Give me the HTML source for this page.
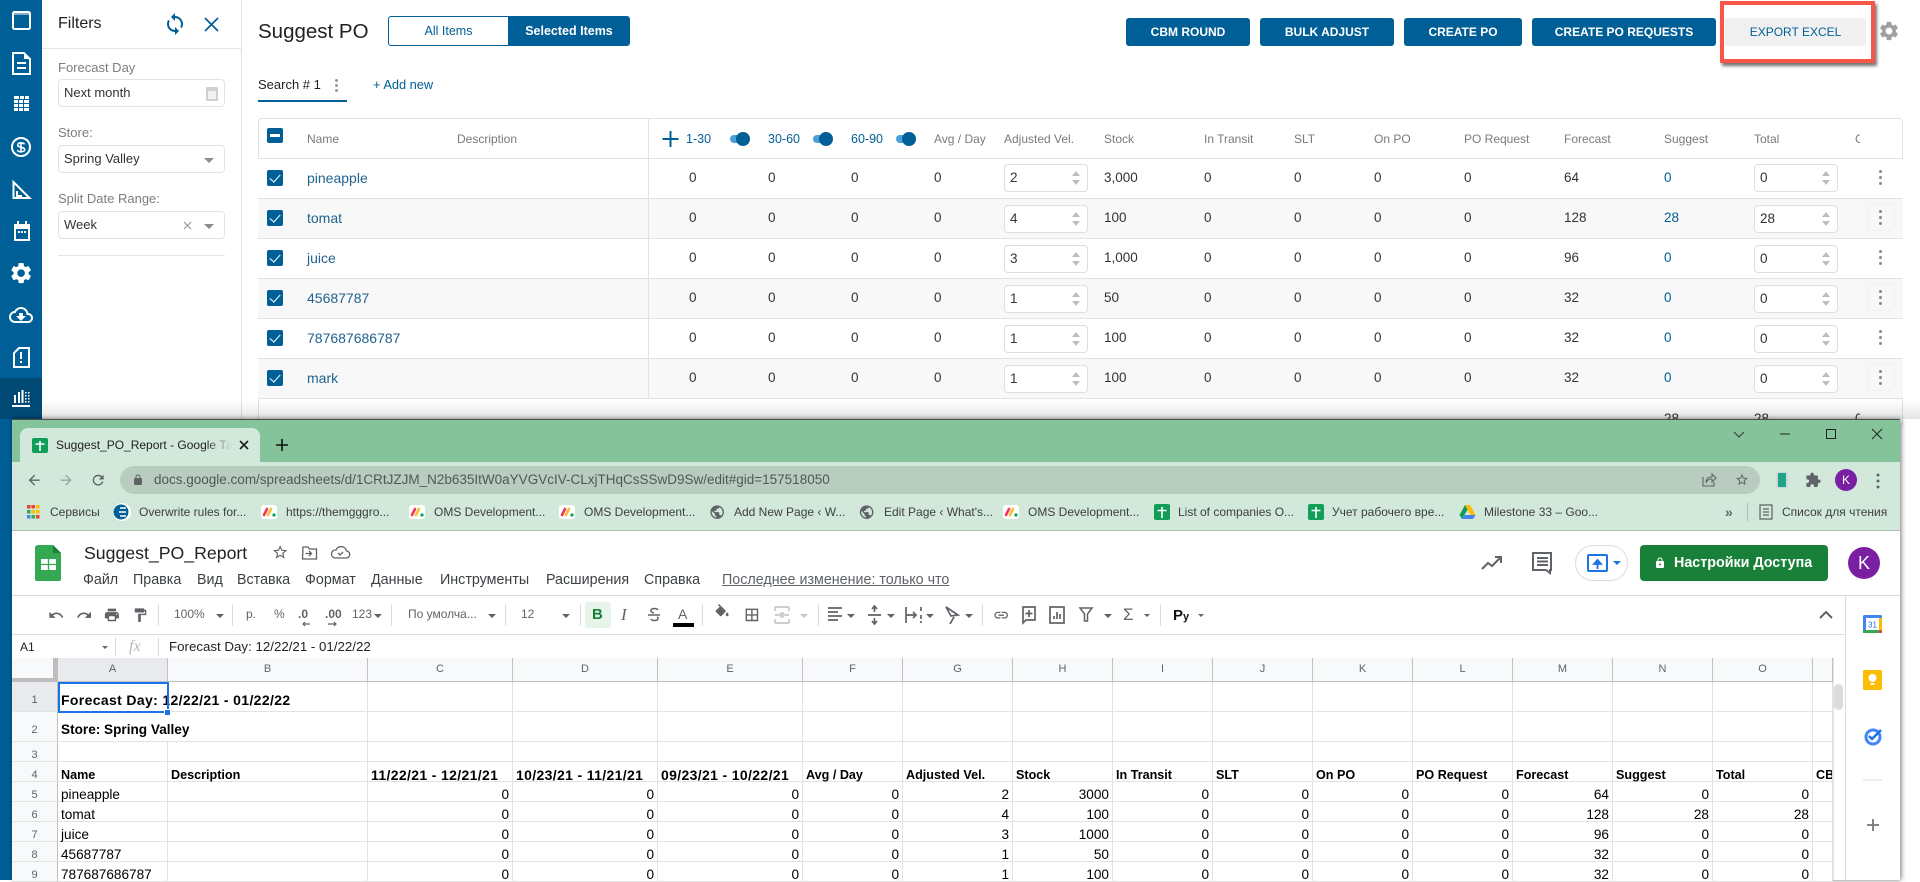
<!DOCTYPE html>
<html lang="en"><head><meta charset="utf-8"><title>Suggest PO</title>
<style>
*{box-sizing:border-box}
html,body{margin:0;padding:0;width:1920px;height:880px;overflow:hidden;background:#fff;font-family:"Liberation Sans","Noto Sans CJK SC",sans-serif;color:#333}
.a{position:absolute}
.t{position:absolute;white-space:nowrap;line-height:16px;margin-top:-8px}
.bl{background:#005f96}
.lbl{font-size:13px;color:#7d7d7d}
.inp{position:absolute;left:58px;width:167px;height:28px;border:1px solid #e3e3e3;border-radius:4px;background:#fff}
.inp span{position:absolute;left:5px;top:5px;font-size:13px;line-height:16px;color:#333}
.car{position:absolute;width:0;height:0;border-left:5px solid transparent;border-right:5px solid transparent;border-top:5px solid #8c8c8c}
.btn{position:absolute;top:18px;height:28px;border-radius:3px;background:#005f96;color:#fff;font-size:12px;font-weight:700;line-height:29px;text-align:center}
.h{position:absolute;top:139px;margin-top:-8px;line-height:16px;font-size:12px;color:#7a7a7a;white-space:nowrap}
.hb{color:#005f96}
.sw{position:absolute;top:132px;width:20px;height:14px}
.sw:before{content:"";position:absolute;left:0;top:3px;width:17px;height:8px;border-radius:4px;background:#4a9fd8}
.sw:after{content:"";position:absolute;right:0;top:0;width:14px;height:14px;border-radius:7px;background:#005f96}
.r{position:absolute;left:258px;width:1645px;height:40px;border-bottom:1px solid #e2e2e2;background:#fff}
.r.e{background:#f8f8f8}
.r>span{position:absolute;top:11px;line-height:16px;font-size:13.5px;color:#333;white-space:nowrap}
.r>.n{left:49px;color:#22648f;font-size:14px}
.c1{left:431px}.c2{left:510px}.c3{left:593px}.c4{left:676px}.st{left:846px}.tr{left:946px}.sl{left:1036px}.on{left:1116px}.rq{left:1206px}.fc{left:1306px}
.r>.sg{left:1406px;color:#005f96;font-weight:400}
.ck{position:absolute;left:9px;top:11px;width:16px;height:16px;background:#005f96;border-radius:2px}
.ck:after{content:"";position:absolute;left:5px;top:2px;width:5px;height:9px;border:solid #fff;border-width:0 1.6px 1.6px 0;transform:rotate(42deg)}
.in{position:absolute;top:6px;width:84px;height:28px;background:#fff;border:1px solid #dedede;border-radius:4px;font-size:13.5px;line-height:26px;padding-left:5px;color:#333}
.in:before,.in:after{content:"";position:absolute;right:7px;width:0;height:0;border-left:4.5px solid transparent;border-right:4.5px solid transparent}
.in:before{top:6px;border-bottom:5px solid #bdbdbd}
.in:after{bottom:6px;border-top:5px solid #bdbdbd}
.i1{left:746px}.i2{left:1496px}
.ds{position:absolute;left:1621px;top:11px;width:3px;height:3px;border-radius:2px;background:#8a8a8a;box-shadow:0 6px #8a8a8a,0 12px #8a8a8a}
.hv{position:absolute;left:1609px;top:4px;width:28px;height:28px;border:1px solid #f0f0f0;border-radius:4px}
.bm{position:absolute;top:504px;font-size:12px;line-height:16px;color:#3c4043;white-space:nowrap}
.m{position:absolute;top:572px;font-size:14.3px;line-height:16px;color:#3c4043;white-space:nowrap}
.tb{position:absolute;top:606px;font-size:12px;line-height:16px;color:#5f6368;white-space:nowrap}
.tc{position:absolute;width:0;height:0;border-left:4px solid transparent;border-right:4px solid transparent;border-top:4px solid #5f6368;top:614px}
.sp{position:absolute;top:604px;width:1px;height:22px;background:#dadce0}
table.g{position:absolute;left:12px;top:658px;width:1821px;border-collapse:separate;border-spacing:0;table-layout:fixed;font-size:13.6px;color:#000;background:#fff}
.g td{padding:7px 3px 0;border-right:1px solid #e2e3e3;border-bottom:1px solid #e2e3e3;white-space:nowrap;overflow:visible;font-weight:400;line-height:12px}
.g th{padding:0;border-right:1px solid #c0c0c0;border-bottom:1px solid #c0c0c0;background:#f8f9fa;color:#5f6368;font-size:11px;font-weight:400;text-align:center;height:24px;line-height:15px}
.g td.rh{background:#f8f9fa;color:#5f6368;font-size:11px;text-align:center;border-right:1px solid #c0c0c0;padding:6px 0 0}
.g td.v{text-align:right}
.g td.k{font-size:12.6px;font-weight:700}
.g td.d{font-size:14px;letter-spacing:.35px;font-weight:700}
.g td.s{font-size:13.6px;font-weight:700}
.g tr.h30 td{height:30px}.g tr.h20 td{height:20px}
</style></head><body>

<!-- app background -->
<div class="a bl" style="left:0;top:0;width:42px;height:880px"></div>
<div class="a" style="left:0;top:378px;width:42px;height:41px;background:#004a75"></div>
<div class="a" style="left:241px;top:0;width:1px;height:420px;background:#e0e0e0"></div>
<div class="a" style="left:42px;top:48px;width:199px;height:1px;background:#e6e6e6"></div>

<div class="t" style="left:58px;top:24px;font-size:16px;color:#222">Filters</div>
<div class="t lbl" style="left:58px;top:68px">Forecast Day</div>
<div class="inp" style="top:79px"><span>Next month</span><div class="a" style="left:147px;top:7px;width:12px;height:14px;background:#d0d0d0;border-radius:1px"><div class="a" style="left:2px;top:4px;width:8px;height:8px;background:#f2f2f2"></div></div></div>
<div class="t lbl" style="left:58px;top:133px">Store:</div>
<div class="inp" style="top:145px"><span>Spring Valley</span><i class="car" style="left:145px;top:12px"></i></div>
<div class="t lbl" style="left:58px;top:199px">Split Date Range:</div>
<div class="inp" style="top:211px"><span>Week</span><i class="car" style="left:145px;top:12px"></i></div>
<div class="a" style="left:58px;top:255px;width:167px;height:1px;background:#e6e6e6"></div>

<div class="t" style="left:258px;top:32px;font-size:20.5px;line-height:24px;margin-top:-12px;color:#222">Suggest PO</div>
<div class="a" style="left:388px;top:16px;width:242px;height:30px;border:1px solid #005f96;border-radius:3px;overflow:hidden">
  <div class="a" style="left:0;top:0;width:119px;height:28px;text-align:center;font-size:12.5px;line-height:28px;color:#005f96">All Items</div>
  <div class="a bl" style="left:119px;top:0;width:122px;height:28px;text-align:center;font-size:12.5px;font-weight:700;line-height:28px;color:#fff">Selected Items</div>
</div>

<div class="t" style="left:258px;top:85px;font-size:13px;color:#222">Search # 1</div>
<div class="a" style="left:335px;top:79px;width:3px;height:3px;border-radius:2px;background:#9a9a9a;box-shadow:0 5px #9a9a9a,0 10px #9a9a9a"></div>
<div class="a bl" style="left:258px;top:100px;width:89px;height:2px"></div>
<div class="t" style="left:373px;top:85px;font-size:12.8px;color:#005f96">+ Add new</div>

<div class="btn" style="left:1126px;width:124px">CBM ROUND</div>
<div class="btn" style="left:1260px;width:134px">BULK ADJUST</div>
<div class="btn" style="left:1404px;width:118px">CREATE PO</div>
<div class="btn" style="left:1532px;width:184px">CREATE PO REQUESTS</div>
<div class="btn" style="left:1725px;width:141px;background:#f0f0f0;color:#005f96;font-weight:400">EXPORT EXCEL</div>
<div class="a" style="left:1720px;top:1px;width:155px;height:62px;border:4px solid #f9564a;box-shadow:2px 3px 3px rgba(0,0,0,.55)"></div>

<!-- table -->
<div class="a" style="left:258px;top:118px;width:1645px;height:310px;border:1px solid #e2e2e2;border-radius:4px;background:#fff"></div>
<div class="a" style="left:259px;top:158px;width:1643px;height:1px;background:#e2e2e2"></div>
<div class="a" style="left:267px;top:128px;width:16px;height:15px;background:#005f96;border-radius:2px"><div class="a" style="left:3px;top:6px;width:10px;height:2.5px;background:#fff"></div></div>
<div class="h" style="left:307px">Name</div>
<div class="h" style="left:457px">Description</div>
<div class="h hb" style="left:686px;font-size:12.5px">1-30</div><div class="sw" style="left:730px"></div>
<div class="h hb" style="left:768px;font-size:12.5px">30-60</div><div class="sw" style="left:813px"></div>
<div class="h hb" style="left:851px;font-size:12.5px">60-90</div><div class="sw" style="left:896px"></div>
<div class="h" style="left:934px">Avg / Day</div>
<div class="h" style="left:1004px">Adjusted Vel.</div>
<div class="h" style="left:1104px">Stock</div>
<div class="h" style="left:1204px">In Transit</div>
<div class="h" style="left:1294px">SLT</div>
<div class="h" style="left:1374px">On PO</div>
<div class="h" style="left:1464px">PO Request</div>
<div class="h" style="left:1564px">Forecast</div>
<div class="h" style="left:1664px">Suggest</div>
<div class="h" style="left:1754px">Total</div>
<div class="h" style="left:1855px;width:5px;overflow:hidden">CBM</div>

<div class="r" style="top:159px"><i class="ck"></i><span class="n">pineapple</span><span class="c1">0</span><span class="c2">0</span><span class="c3">0</span><span class="c4">0</span><div class="in i1" style="top:5px">2</div><span class="st">3,000</span><span class="tr">0</span><span class="sl">0</span><span class="on">0</span><span class="rq">0</span><span class="fc">64</span><span class="sg">0</span><div class="in i2" style="top:5px">0</div><i class="ds"></i></div>
<div class="r e" style="top:199px"><i class="ck"></i><span class="n">tomat</span><span class="c1">0</span><span class="c2">0</span><span class="c3">0</span><span class="c4">0</span><div class="in i1">4</div><span class="st">100</span><span class="tr">0</span><span class="sl">0</span><span class="on">0</span><span class="rq">0</span><span class="fc">128</span><span class="sg">28</span><div class="in i2">28</div><i class="hv"></i><i class="ds"></i></div>
<div class="r" style="top:239px"><i class="ck"></i><span class="n">juice</span><span class="c1">0</span><span class="c2">0</span><span class="c3">0</span><span class="c4">0</span><div class="in i1">3</div><span class="st">1,000</span><span class="tr">0</span><span class="sl">0</span><span class="on">0</span><span class="rq">0</span><span class="fc">96</span><span class="sg">0</span><div class="in i2">0</div><i class="ds"></i></div>
<div class="r e" style="top:279px"><i class="ck"></i><span class="n">45687787</span><span class="c1">0</span><span class="c2">0</span><span class="c3">0</span><span class="c4">0</span><div class="in i1">1</div><span class="st">50</span><span class="tr">0</span><span class="sl">0</span><span class="on">0</span><span class="rq">0</span><span class="fc">32</span><span class="sg">0</span><div class="in i2">0</div><i class="hv"></i><i class="ds"></i></div>
<div class="r" style="top:319px"><i class="ck"></i><span class="n">787687686787</span><span class="c1">0</span><span class="c2">0</span><span class="c3">0</span><span class="c4">0</span><div class="in i1">1</div><span class="st">100</span><span class="tr">0</span><span class="sl">0</span><span class="on">0</span><span class="rq">0</span><span class="fc">32</span><span class="sg">0</span><div class="in i2">0</div><i class="ds"></i></div>
<div class="r e" style="top:359px"><i class="ck"></i><span class="n">mark</span><span class="c1">0</span><span class="c2">0</span><span class="c3">0</span><span class="c4">0</span><div class="in i1">1</div><span class="st">100</span><span class="tr">0</span><span class="sl">0</span><span class="on">0</span><span class="rq">0</span><span class="fc">32</span><span class="sg">0</span><div class="in i2">0</div><i class="hv"></i><i class="ds"></i></div>
<div class="a" style="left:648px;top:119px;width:1px;height:279px;background:#e2e2e2"></div>
<div class="t" style="left:1664px;top:419px;font-size:13.5px">28</div>
<div class="t" style="left:1754px;top:419px;font-size:13.5px">28</div>
<div class="t" style="left:1855px;top:419px;font-size:13.5px;width:5px;overflow:hidden">0</div>
<div class="a" style="left:42px;top:400px;width:1878px;height:19px;background:linear-gradient(rgba(0,0,0,0),rgba(0,0,0,.1))"></div>

<!-- browser window -->
<div class="a" style="left:12px;top:419px;width:1888px;height:461px;background:#fff;box-shadow:1px 0 5px rgba(0,0,0,.55);border-top:1px solid #47564d"></div>
<div class="a" style="left:12px;top:420px;width:1888px;height:42px;background:#85c39a"></div>
<div class="a" style="left:12px;top:462px;width:1888px;height:69px;background:#d2e8da;border-bottom:1px solid #a9bfb1"></div>
<div class="a" style="left:20px;top:428px;width:240px;height:36px;background:#d2e8da;border-radius:8px 8px 0 0"></div>
<div class="t" style="left:56px;top:445px;font-size:12px;width:176px;overflow:hidden;color:#222">Suggest_PO_Report - Google Таблицы</div>
<div class="a" style="left:205px;top:437px;width:27px;height:16px;background:linear-gradient(90deg,rgba(210,232,218,0),#d2e8da)"></div>
<div class="a" style="left:120px;top:466px;width:1640px;height:28px;border-radius:14px;background:#b9ccc0"></div>
<div class="t" style="left:154px;top:480px;font-size:13.5px;color:#4d5a53">docs.google.com/spreadsheets/d/1CRtJZJM_N2b635ItW0aYVGVcIV-CLxjTHqCsSSwD9Sw/edit#gid=157518050</div>

<div class="bm" style="left:50px">Сервисы</div>
<div class="bm" style="left:139px">Overwrite rules for...</div>
<div class="bm" style="left:286px">https://themgggro...</div>
<div class="bm" style="left:434px">OMS Development...</div>
<div class="bm" style="left:584px">OMS Development...</div>
<div class="bm" style="left:734px">Add New Page ‹ W...</div>
<div class="bm" style="left:884px">Edit Page ‹ What's...</div>
<div class="bm" style="left:1028px">OMS Development...</div>
<div class="bm" style="left:1178px">List of companies O...</div>
<div class="bm" style="left:1332px">Учет рабочего вре...</div>
<div class="bm" style="left:1484px">Milestone 33 – Goo...</div>
<div class="bm" style="left:1725px;font-size:14px;font-weight:700;color:#5f6368">»</div>
<div class="a" style="left:1747px;top:503px;width:1px;height:18px;background:#a9bfb1"></div>
<div class="bm" style="left:1782px">Список для чтения</div>

<!-- sheets header -->
<div class="t" style="left:84px;top:553px;font-size:17.7px;line-height:22px;margin-top:-11px;color:#222">Suggest_PO_Report</div>
<div class="m" style="left:83px">Файл</div>
<div class="m" style="left:133px">Правка</div>
<div class="m" style="left:197px">Вид</div>
<div class="m" style="left:237px">Вставка</div>
<div class="m" style="left:305px">Формат</div>
<div class="m" style="left:371px">Данные</div>
<div class="m" style="left:440px">Инструменты</div>
<div class="m" style="left:546px">Расширения</div>
<div class="m" style="left:644px">Справка</div>
<div class="m" style="left:722px;color:#5f6368;text-decoration:underline">Последнее изменение: только что</div>

<div class="a" style="left:1575px;top:545px;width:53px;height:36px;border:1px solid #dadce0;border-radius:18px"></div>
<div class="a" style="left:1587px;top:554px;width:21px;height:18px;border:2px solid #1a73e8;border-radius:2px"></div>
<div class="a" style="left:1613px;top:561px;width:0;height:0;border-left:4px solid transparent;border-right:4px solid transparent;border-top:4px solid #1a73e8"></div>
<div class="a" style="left:1640px;top:545px;width:188px;height:36px;border-radius:4px;background:#188038"></div>
<div class="t" style="left:1674px;top:563px;font-size:14.3px;font-weight:700;color:#fff">Настройки Доступа</div>
<div class="a" style="left:1848px;top:547px;width:32px;height:32px;border-radius:16px;background:#7b1fa2;color:#fff;font-size:18px;line-height:32px;text-align:center">K</div>
<div class="a" style="left:1835px;top:469px;width:22px;height:22px;border-radius:11px;background:#7b1fa2;color:#fff;font-size:12px;line-height:22px;text-align:center">K</div>

<div class="a" style="left:12px;top:595px;width:1888px;height:1px;background:#dadce0"></div>
<div class="a" style="left:12px;top:634px;width:1833px;height:1px;background:#dadce0"></div>
<div class="a" style="left:1845px;top:595px;width:1px;height:285px;background:#dadce0"></div>

<!-- sheets toolbar text & separators -->
<div class="sp" style="left:158px"></div><div class="sp" style="left:232px"></div><div class="sp" style="left:391px"></div><div class="sp" style="left:505px"></div><div class="sp" style="left:580px"></div><div class="sp" style="left:702px"></div><div class="sp" style="left:818px"></div><div class="sp" style="left:982px"></div><div class="sp" style="left:1160px"></div>
<div class="tb" style="left:174px">100%</div><i class="tc" style="left:216px"></i>
<div class="tb" style="left:246px">р.</div>
<div class="tb" style="left:274px">%</div>
<div class="tb" style="left:298px;font-weight:700">.0</div>
<div class="tb" style="left:325px;font-weight:700">.00</div>
<div class="tb" style="left:352px">123</div><i class="tc" style="left:374px"></i>
<div class="tb" style="left:408px">По умолча...</div><i class="tc" style="left:488px"></i>
<div class="tb" style="left:521px">12</div><i class="tc" style="left:562px"></i>
<div class="a" style="left:585px;top:602px;width:26px;height:26px;border-radius:3px;background:#e6f4ea"></div>
<div class="t" style="left:592px;top:615px;font-size:15px;font-weight:700;color:#188038">B</div>
<div class="t" style="left:621px;top:615px;font-size:17px;font-style:italic;font-family:'Liberation Serif',serif;color:#5f6368">I</div>
<div class="t" style="left:678px;top:614px;font-size:14px;color:#5f6368">A</div>
<div class="a" style="left:673px;top:623px;width:21px;height:4px;background:#000"></div>
<i class="tc" style="left:800px;border-top-color:#c4c4c4"></i><i class="tc" style="left:847px"></i><i class="tc" style="left:887px"></i><i class="tc" style="left:926px"></i><i class="tc" style="left:965px"></i><i class="tc" style="left:1104px"></i><i class="tc" style="left:1144px;border-left-width:3px;border-right-width:3px;border-top-width:3px"></i><i class="tc" style="left:1198px;border-left-width:3px;border-right-width:3px;border-top-width:3px"></i>
<div class="t" style="left:1123px;top:615px;font-size:17px;color:#5f6368">Σ</div>
<div class="t" style="left:1173px;top:616px;font-size:15px;font-weight:700;color:#111">P<span style="font-size:11px">y</span></div>

<!-- formula bar -->
<div class="t" style="left:20px;top:647px;font-size:12px;color:#222">A1</div>
<div class="a" style="left:102px;top:646px;width:0;height:0;border-left:3px solid transparent;border-right:3px solid transparent;border-top:3px solid #5f6368"></div>
<div class="a" style="left:115px;top:637px;width:1px;height:19px;background:#dadce0"></div>
<div class="t" style="left:129px;top:647px;font-size:16px;font-style:italic;font-family:'Liberation Serif',serif;color:#b5b5b5">fx</div>
<div class="a" style="left:158px;top:637px;width:1px;height:19px;background:#dadce0"></div>
<div class="t" style="left:169px;top:647px;font-size:13.3px;color:#222">Forecast Day: 12/22/21 - 01/22/22</div>

<!-- sheet grid -->
<table class="g">
<colgroup><col style="width:46px"><col style="width:110px"><col style="width:200px"><col style="width:145px"><col style="width:145px"><col style="width:145px"><col style="width:100px"><col style="width:110px"><col style="width:100px"><col style="width:100px"><col style="width:100px"><col style="width:100px"><col style="width:100px"><col style="width:100px"><col style="width:100px"><col style="width:100px"><col style="width:20px"></colgroup>
<tr class="ch"><th></th><th style="background:#e8eaed">A</th><th>B</th><th>C</th><th>D</th><th>E</th><th>F</th><th>G</th><th>H</th><th>I</th><th>J</th><th>K</th><th>L</th><th>M</th><th>N</th><th>O</th><th></th></tr>
<tr class="h30"><td class="rh" style="background:#e8eaed">1</td><td class="d" style="border-right:0">Forecast Day: 12/22/21 - 01/22/22</td><td></td><td></td><td></td><td></td><td></td><td></td><td></td><td></td><td></td><td></td><td></td><td></td><td></td><td></td><td></td></tr>
<tr class="h30"><td class="rh">2</td><td class="s" style="border-right:0">Store: Spring Valley</td><td></td><td></td><td></td><td></td><td></td><td></td><td></td><td></td><td></td><td></td><td></td><td></td><td></td><td></td><td></td></tr>
<tr class="h20"><td class="rh">3</td><td></td><td></td><td></td><td></td><td></td><td></td><td></td><td></td><td></td><td></td><td></td><td></td><td></td><td></td><td></td><td></td></tr>
<tr class="h20"><td class="rh">4</td><td class="k">Name</td><td class="k">Description</td><td class="d">11/22/21 - 12/21/21</td><td class="d">10/23/21 - 11/21/21</td><td class="d">09/23/21 - 10/22/21</td><td class="k">Avg / Day</td><td class="k">Adjusted Vel.</td><td class="k">Stock</td><td class="k">In Transit</td><td class="k">SLT</td><td class="k">On PO</td><td class="k">PO Request</td><td class="k">Forecast</td><td class="k">Suggest</td><td class="k">Total</td><td class="k" style="overflow:hidden">CB</td></tr>
<tr class="h20"><td class="rh">5</td><td>pineapple</td><td></td><td class="v">0</td><td class="v">0</td><td class="v">0</td><td class="v">0</td><td class="v">2</td><td class="v">3000</td><td class="v">0</td><td class="v">0</td><td class="v">0</td><td class="v">0</td><td class="v">64</td><td class="v">0</td><td class="v">0</td><td></td></tr>
<tr class="h20"><td class="rh">6</td><td>tomat</td><td></td><td class="v">0</td><td class="v">0</td><td class="v">0</td><td class="v">0</td><td class="v">4</td><td class="v">100</td><td class="v">0</td><td class="v">0</td><td class="v">0</td><td class="v">0</td><td class="v">128</td><td class="v">28</td><td class="v">28</td><td></td></tr>
<tr class="h20"><td class="rh">7</td><td>juice</td><td></td><td class="v">0</td><td class="v">0</td><td class="v">0</td><td class="v">0</td><td class="v">3</td><td class="v">1000</td><td class="v">0</td><td class="v">0</td><td class="v">0</td><td class="v">0</td><td class="v">96</td><td class="v">0</td><td class="v">0</td><td></td></tr>
<tr class="h20"><td class="rh">8</td><td>45687787</td><td></td><td class="v">0</td><td class="v">0</td><td class="v">0</td><td class="v">0</td><td class="v">1</td><td class="v">50</td><td class="v">0</td><td class="v">0</td><td class="v">0</td><td class="v">0</td><td class="v">32</td><td class="v">0</td><td class="v">0</td><td></td></tr>
<tr class="h20"><td class="rh">9</td><td>787687686787</td><td></td><td class="v">0</td><td class="v">0</td><td class="v">0</td><td class="v">0</td><td class="v">1</td><td class="v">100</td><td class="v">0</td><td class="v">0</td><td class="v">0</td><td class="v">0</td><td class="v">32</td><td class="v">0</td><td class="v">0</td><td></td></tr>
</table>
<div class="a" style="left:53px;top:658px;width:5px;height:24px;background:#bdbdbd"></div>
<div class="a" style="left:12px;top:678px;width:46px;height:4px;background:#bdbdbd"></div>
<div class="a" style="left:58px;top:682px;width:111px;height:31px;border:2px solid #1a73e8"></div>
<div class="a" style="left:164px;top:709px;width:7px;height:7px;background:#1a73e8;border:1px solid #fff"></div>
<div class="a" style="left:1833px;top:658px;width:12px;height:222px;background:#fff;border-left:1px solid #e2e3e3"></div>
<div class="a" style="left:1834px;top:684px;width:9px;height:26px;border-radius:5px;background:#dadce0"></div>

<!-- icons -->
<svg class="a" style="left:0;top:0" width="1920" height="880" viewBox="0 0 1920 880" fill="none">
 <!-- sidebar -->
 <g fill="none" stroke="#fff" stroke-width="2">
  <rect x="13" y="12" width="17" height="17" rx="1.5"/><path d="M13 14h17" stroke-width="1"/>
  <path d="M13 53h11l6 6v15H13z"/><path d="M17 63h9M17 68h9"/>
  <circle cx="21" cy="147" r="9"/>
  <path d="M13.5 182v16h16zM17 191v5h5"/>
 </g>
 <g fill="#fff">
  <path d="M24 53l6 6h-6z"/>
  <path d="M14 96h5v3h-5zM20 96h4v3h-4zM25 96h4v3h-4zM14 100h4v3h-4zM19 100h4v3h-4zM24 100h5v3h-5zM14 104h4v3h-4zM19 104h4v3h-4zM24 104h5v3h-5zM14 108h4v3h-4zM19 108h4v3h-4zM24 108h5v3h-5z"/>
  <path d="M14 224h3v-3h2v3h6v-3h2v3h3v17H14zm2 5v10h12v-10zM18 231h2v2h-2zM21 231h2v2h-2zM24 231h2v2h-2z" fill-rule="evenodd"/>
  <path transform="translate(8.5 260.5) scale(1.05)" d="M19.14 12.94c.04-.3.06-.61.06-.94 0-.32-.02-.64-.07-.94l2.03-1.58c.18-.14.23-.41.12-.61l-1.92-3.32c-.12-.22-.37-.29-.59-.22l-2.39.96c-.5-.38-1.03-.7-1.62-.94l-.36-2.54c-.04-.24-.24-.41-.48-.41h-3.84c-.24 0-.43.17-.47.41l-.36 2.54c-.59.24-1.13.57-1.62.94l-2.39-.96c-.22-.08-.47 0-.59.22L2.74 8.87c-.12.21-.08.47.12.61l2.03 1.58c-.05.3-.09.63-.09.94s.02.64.07.94l-2.03 1.58c-.18.14-.23.41-.12.61l1.92 3.32c.12.22.37.29.59.22l2.39-.96c.5.38 1.03.7 1.62.94l.36 2.54c.05.24.24.41.48.41h3.84c.24 0 .44-.17.47-.41l.36-2.54c.59-.24 1.13-.56 1.62-.94l2.39.96c.22.08.47 0 .59-.22l1.92-3.32c.12-.22.07-.47-.12-.61l-2.01-1.58zM12 15.6c-1.98 0-3.6-1.62-3.6-3.6s1.62-3.6 3.6-3.6 3.6 1.62 3.6 3.6-1.62 3.6-3.6 3.6z"/>
  <path transform="translate(9 303)" d="M19.35 10.04C18.67 6.59 15.64 4 12 4 9.11 4 6.6 5.64 5.35 8.04 2.34 8.36 0 10.91 0 14c0 3.31 2.69 6 6 6h13c2.76 0 5-2.24 5-5 0-2.64-2.05-4.78-4.65-4.96zM19 18H6c-2.21 0-4-1.79-4-4s1.79-4 4-4h.71C7.37 7.69 9.48 6 12 6c3.04 0 5.5 2.46 5.5 5.5v.5H19c1.66 0 3 1.34 3 3s-1.34 3-3 3zM14 13v-3h-4v3H7l5 5 5-5z"/>
  <path d="M14 395h2v8h-2zM18 392h2v11h-2zM21.500 390h2v13h-2zM25 392h1.500v1.500H25zM25 395h1.500v1.500H25zM25 398h1.500v1.500H25zM25 401h1.500v1.500H25zM28 392h1.500v1.500H28zM28 395h1.500v1.500H28zM28 398h1.500v1.500H28zM28 401h1.500v1.500H28zM12 405h18v2H12z"/>
  <path d="M20 352h2v7h-2zM20 361h2v2h-2z"/>
 </g>
 <path d="M19 348h10v19H14v-14z" stroke="#fff" stroke-width="2"/>
 <path d="M21 142v10M24.5 144.3c-.6-1-1.8-1.5-3.5-1.5-2 0-3.3.9-3.3 2.2 0 3 7 1.6 7 4.6 0 1.3-1.5 2.2-3.7 2.2-1.7 0-3.1-.6-3.7-1.7" stroke="#fff" stroke-width="1.6"/>

 <!-- filter head -->
 <path transform="translate(163 12)" fill="#005f96" d="M12 4V1L8 5l4 4V6c3.31 0 6 2.69 6 6 0 1.01-.25 1.97-.7 2.8l1.46 1.46C19.54 15.03 20 13.57 20 12c0-4.42-3.58-8-8-8zm0 14c-3.31 0-6-2.69-6-6 0-1.01.25-1.97.7-2.8L5.24 7.74C4.46 8.97 4 10.43 4 12c0 4.42 3.58 8 8 8v3l4-4-4-4v3z" />
 <path d="M205 18l13 13M218 18l-13 13" stroke="#005f96" stroke-width="1.7"/>
 <path d="M184 222l7 7M191 222l-7 7" stroke="#9a9a9a" stroke-width="1.2"/>
 <!-- plus header -->
 <path d="M662.5 139h16M670.5 131v16" stroke="#005f96" stroke-width="2"/>
 <!-- gear -->
 <path transform="translate(1877.600 19.600) scale(.95)" fill="#a0a0a0" d="M19.14 12.94c.04-.3.06-.61.06-.94 0-.32-.02-.64-.07-.94l2.03-1.58c.18-.14.23-.41.12-.61l-1.92-3.32c-.12-.22-.37-.29-.59-.22l-2.39.96c-.5-.38-1.03-.7-1.62-.94l-.36-2.54c-.04-.24-.24-.41-.48-.41h-3.84c-.24 0-.43.17-.47.41l-.36 2.54c-.59.24-1.13.57-1.62.94l-2.39-.96c-.22-.08-.47 0-.59.22L2.74 8.87c-.12.21-.08.47.12.61l2.03 1.58c-.05.3-.09.63-.09.94s.02.64.07.94l-2.03 1.58c-.18.14-.23.41-.12.61l1.92 3.32c.12.22.37.29.59.22l2.39-.96c.5.38 1.03.7 1.62.94l.36 2.54c.05.24.24.41.48.41h3.84c.24 0 .44-.17.47-.41l.36-2.54c.59-.24 1.13-.56 1.62-.94l2.39.96c.22.08.47 0 .59-.22l1.92-3.32c.12-.22.07-.47-.12-.61l-2.01-1.58zM12 15.6c-1.98 0-3.6-1.62-3.6-3.6s1.62-3.6 3.6-3.6 3.6 1.62 3.6 3.6-1.62 3.6-3.6 3.6z"/>

 <!-- chrome tab -->
 <rect x="32" y="438" width="16" height="15" rx="2" fill="#0f9d58"/><path d="M40 441v10M35.5 444h9" stroke="#fff" stroke-width="1.6"/>
 <path d="M240 441l8 8M248 441l-8 8" stroke="#222" stroke-width="1.7"/>
 <path d="M276 445h12M282 439v12" stroke="#111" stroke-width="1.6"/>
 <!-- win controls -->
 <path d="M1734 432l5 5 5-5" stroke="#333" stroke-width="1"/><path d="M1780 434h10" stroke="#222" stroke-width="1"/><rect x="1826.5" y="429.5" width="9" height="9" stroke="#222"/><path d="M1872 429l10 10M1882 429l-10 10" stroke="#222" stroke-width="1"/>
 <!-- nav -->
 <path transform="translate(26 472) scale(.68)" fill="#5f6368" d="M20 11H7.83l5.59-5.59L12 4l-8 8 8 8 1.41-1.41L7.83 13H20v-2z"/>
 <path transform="translate(58 472) scale(.68)" fill="#9aa59f" d="M12 4l-1.41 1.41L16.17 11H4v2h12.17l-5.58 5.59L12 20l8-8z"/>
 <path transform="translate(90 472) scale(.68)" fill="#5f6368" d="M17.65 6.35C16.2 4.9 14.21 4 12 4c-4.42 0-7.99 3.58-7.99 8s3.57 8 7.99 8c3.73 0 6.84-2.55 7.73-6h-2.08c-.82 2.33-3.04 4-5.65 4-3.31 0-6-2.69-6-6s2.69-6 6-6c1.66 0 3.14.69 4.22 1.78L13 11h7V4l-2.35 2.35z"/>
 <path transform="translate(132 474) scale(.5)" fill="#5f6368" d="M18 8h-1V6c0-2.76-2.24-5-5-5S7 3.24 7 6v2H6c-1.1 0-2 .9-2 2v10c0 1.1.9 2 2 2h12c1.1 0 2-.9 2-2V10c0-1.1-.9-2-2-2zm-2.9 0H8.9V6c0-1.71 1.39-3.1 3.1-3.1 1.71 0 3.1 1.39 3.1 3.1v2z"/>
 <!-- omnibox right -->
 <path d="M1703 477v9h11v-4M1706 483c0-4 2-6 6-6v-3l4 4-4 4v-3c-3 0-5 1-6 4z" stroke="#5f6368" stroke-width="1.1"/>
 <path transform="translate(1734.8 472.5) scale(.6)" fill="#5f6368" d="M22 9.24l-7.19-.62L12 2 9.19 8.63 2 9.24l5.46 4.73L5.82 21 12 17.27 18.18 21l-1.63-7.03L22 9.24zM12 15.4l-3.76 2.27 1-4.28-3.32-2.88 4.38-.38L12 6.1l1.71 4.04 4.38.38-3.32 2.88 1 4.28L12 15.4z"/>
 <rect x="1776" y="472" width="12" height="16" rx="1" fill="#cfd8d3"/><rect x="1778" y="473" width="8" height="14" fill="#1fa48c"/>
 <path transform="translate(1805 472) scale(.68)" fill="#5f6368" d="M20.5 11H19V7c0-1.1-.9-2-2-2h-4V3.5C13 2.12 11.88 1 10.5 1S8 2.12 8 3.5V5H4c-1.1 0-1.99.9-1.99 2v3.8H3.5c1.49 0 2.7 1.21 2.7 2.7s-1.21 2.7-2.7 2.7H2V20c0 1.1.9 2 2 2h3.8v-1.5c0-1.49 1.21-2.7 2.7-2.7 1.49 0 2.7 1.21 2.7 2.7V22H17c1.1 0 2-.9 2-2v-4h1.5c1.38 0 2.5-1.12 2.5-2.5S21.88 11 20.5 11z"/>
 <g fill="#5f6368"><circle cx="1878" cy="475" r="1.5"/><circle cx="1878" cy="481" r="1.5"/><circle cx="1878" cy="487" r="1.5"/></g>
 <!-- bookmarks -->
 <g><rect x="27" y="505" width="3.5" height="3.5" fill="#ea4335"/><rect x="31.5" y="505" width="3.5" height="3.5" fill="#ea4335"/><rect x="36" y="505" width="3.5" height="3.5" fill="#fbbc04"/><rect x="27" y="510" width="3.5" height="3.5" fill="#34a853"/><rect x="31.5" y="510" width="3.5" height="3.5" fill="#fbbc04"/><rect x="36" y="510" width="3.5" height="3.5" fill="#fbbc04"/><rect x="27" y="515" width="3.5" height="3.5" fill="#4285f4"/><rect x="31.5" y="515" width="3.5" height="3.5" fill="#34a853"/><rect x="36" y="515" width="3.5" height="3.5" fill="#ea4335"/></g>
 <circle cx="122" cy="512" r="9" fill="#fff"/><circle cx="121" cy="512" r="7.5" fill="#005f96"/><path d="M120 508h6M119 512h7M120 516h6" stroke="#fff" stroke-width="1.4"/>
 <g>
  <g transform="translate(269 512)"><rect x="-8" y="-7" width="16" height="14" rx="3" fill="#fff"/><path d="M-5 3l3-6" stroke="#f8345a" stroke-width="2.6" stroke-linecap="round"/><path d="M-1 3l3-6" stroke="#fbc02d" stroke-width="2.6" stroke-linecap="round"/><circle cx="5" cy="3" r="1.6" fill="#00a35c"/></g>
  <g transform="translate(417 512)"><rect x="-8" y="-7" width="16" height="14" rx="3" fill="#fff"/><path d="M-5 3l3-6" stroke="#f8345a" stroke-width="2.6" stroke-linecap="round"/><path d="M-1 3l3-6" stroke="#fbc02d" stroke-width="2.6" stroke-linecap="round"/><circle cx="5" cy="3" r="1.6" fill="#00a35c"/></g>
  <g transform="translate(567 512)"><rect x="-8" y="-7" width="16" height="14" rx="3" fill="#fff"/><path d="M-5 3l3-6" stroke="#f8345a" stroke-width="2.6" stroke-linecap="round"/><path d="M-1 3l3-6" stroke="#fbc02d" stroke-width="2.6" stroke-linecap="round"/><circle cx="5" cy="3" r="1.6" fill="#00a35c"/></g>
  <g transform="translate(1011 512)"><rect x="-8" y="-7" width="16" height="14" rx="3" fill="#fff"/><path d="M-5 3l3-6" stroke="#f8345a" stroke-width="2.6" stroke-linecap="round"/><path d="M-1 3l3-6" stroke="#fbc02d" stroke-width="2.6" stroke-linecap="round"/><circle cx="5" cy="3" r="1.6" fill="#00a35c"/></g>
 </g>
 <path transform="translate(709 504) scale(.68)" fill="#5f6368" d="M12 2C6.48 2 2 6.48 2 12s4.48 10 10 10 10-4.48 10-10S17.52 2 12 2zm-1 17.93c-3.95-.49-7-3.85-7-7.93 0-.62.08-1.21.21-1.79L9 15v1c0 1.1.9 2 2 2v1.93zm6.9-2.54c-.26-.81-1-1.39-1.9-1.39h-1v-3c0-.55-.45-1-1-1H8v-2h2c.55 0 1-.45 1-1V7h2c1.1 0 2-.9 2-2v-.41c2.93 1.19 5 4.06 5 7.41 0 2.08-.8 3.97-2.1 5.39z"/>
 <path transform="translate(858.5 504) scale(.68)" fill="#5f6368" d="M12 2C6.48 2 2 6.48 2 12s4.48 10 10 10 10-4.48 10-10S17.52 2 12 2zm-1 17.93c-3.95-.49-7-3.85-7-7.93 0-.62.08-1.21.21-1.79L9 15v1c0 1.1.9 2 2 2v1.93zm6.9-2.54c-.26-.81-1-1.39-1.9-1.39h-1v-3c0-.55-.45-1-1-1H8v-2h2c.55 0 1-.45 1-1V7h2c1.1 0 2-.9 2-2v-.41c2.93 1.19 5 4.06 5 7.41 0 2.08-.8 3.97-2.1 5.39z"/>
 <rect x="1154" y="504" width="16" height="16" rx="2" fill="#0f9d58"/><path d="M1162 507v11M1157.5 510.5h9" stroke="#fff" stroke-width="1.6"/>
 <rect x="1308" y="504" width="16" height="16" rx="2" fill="#0f9d58"/><path d="M1316 507v11M1311.5 510.5h9" stroke="#fff" stroke-width="1.6"/>
 <path d="M1465 505l-5.5 10 2.5 4 6-10z" fill="#0f9d58"/><path d="M1465 505h5l5.5 10h-5z" fill="#fbbc04"/><path d="M1462 519h11l2.5-4h-11z" fill="#4285f4"/>
 <path d="M1760 505h12v14h-12zM1763 509h6M1763 512h6M1763 515h6" stroke="#5f6368" stroke-width="1.2"/>

 <!-- sheets logo -->
 <path d="M38 545h15l8 8v26a2 2 0 0 1-2 2H37a2 2 0 0 1-2-2v-31a3 3 0 0 1 3-3z" fill="#34a853"/><path d="M53 545l8 8h-8z" fill="#188038"/>
 <rect x="41" y="559" width="15" height="11" fill="#fff"/><path d="M48.5 559v11M41 564.5h15" stroke="#34a853" stroke-width="1.3"/>
 <path transform="translate(271.5 543.5) scale(.72)" fill="#5f6368" d="M22 9.24l-7.19-.62L12 2 9.19 8.63 2 9.24l5.46 4.73L5.82 21 12 17.27 18.18 21l-1.63-7.03L22 9.24zM12 15.4l-3.76 2.27 1-4.28-3.32-2.88 4.38-.38L12 6.1l1.71 4.04 4.38.38-3.32 2.88 1 4.28L12 15.4z"/>
 <path d="M303 547h5l1.5 2h7v10h-14zM305.500 553.500h5.500M309 551l2.500 2.500-2.500 2.500" stroke="#5f6368" stroke-width="1.300"/>
 <path d="M335 558h11a3.500 3.500 0 0 0 .5-7 5.500 5.500 0 0 0-10.500-1 4 4 0 0 0-1 8zM338 553l2 2 3-3" stroke="#5f6368" stroke-width="1.300"/>
 <path d="M1482 569l6-6 4 3 8-8M1495 557h6v6" stroke="#5f6368" stroke-width="2"/>
 <path d="M1533 553h18v17h-1v3l-4-3h-13zM1537 558h11M1537 561.500h11M1537 565h11" stroke="#5f6368" stroke-width="2"/>
 <path d="M1597.500 569v-8M1594 564l3.500-4 3.500 4z" stroke="#1a73e8" stroke-width="1.800" fill="#1a73e8"/>
 <path transform="translate(1654 557) scale(.5)" fill="#fff" d="M18 8h-1V6c0-2.76-2.24-5-5-5S7 3.240 7 6v2H6c-1.100 0-2 .9-2 2v10c0 1.100.9 2 2 2h12c1.100 0 2-.9 2-2V10c0-1.100-.9-2-2-2zm-6 9c-1.100 0-2-.9-2-2s.9-2 2-2 2 .9 2 2-.9 2-2 2zm3.100-9H8.900V6c0-1.710 1.390-3.100 3.100-3.100 1.710 0 3.100 1.390 3.100 3.100v2z"/>

 <!-- sheets toolbar -->
 <g fill="#5f6368">
  <path transform="translate(48 607) scale(.68)" d="M12.500 8c-2.650 0-5.050.99-6.900 2.600L2 7v9h9l-3.620-3.620c1.390-1.160 3.160-1.880 5.120-1.880 3.540 0 6.550 2.310 7.600 5.500l2.370-.78C21.080 11.030 17.150 8 12.500 8z"/>
  <path transform="translate(76 607) scale(.68)" d="M18.400 10.600C16.550 8.990 14.150 8 11.500 8c-4.650 0-8.580 3.030-9.960 7.220L3.900 16c1.050-3.190 4.050-5.500 7.600-5.500 1.950 0 3.730.72 5.120 1.880L13 16h9V7l-3.600 3.600z"/>
  <path transform="translate(103.500 606.500) scale(.7)" d="M19 8H5c-1.660 0-3 1.340-3 3v6h4v4h12v-4h4v-6c0-1.660-1.340-3-3-3zm-3 11H8v-5h8v5zm3-7c-.55 0-1-.45-1-1s.45-1 1-1 1 .45 1 1-.45 1-1 1zm-1-9H6v4h12V3z"/>
  <path transform="translate(132 607) scale(.68)" d="M18 4V3c0-.55-.45-1-1-1H5c-.55 0-1 .45-1 1v4c0 .55.45 1 1 1h12c.55 0 1-.45 1-1V6h1v4H9v11c0 .55.45 1 1 1h2c.55 0 1-.45 1-1v-9h8V4h-3z"/>
  <path transform="translate(713.500 604) scale(.72)" d="M16.560 8.940L7.620 0 6.210 1.410l2.380 2.380-5.150 5.150c-.59.59-.59 1.540 0 2.120l5.500 5.500c.29.29.68.44 1.060.44s.77-.15 1.060-.44l5.500-5.500c.59-.58.59-1.530 0-2.120zM19 11.500s-2 2.170-2 3.500c0 1.100.9 2 2 2s2-.9 2-2c0-1.330-2-3.500-2-3.500z"/>
  <path transform="translate(743.500 606.500) scale(.7)" d="M3 3v18h18V3H3zm8 16H5v-6h6v6zm0-8H5V5h6v6zm8 8h-6v-6h6v6zm0-8h-6V5h6v6z"/>
  <path transform="translate(993 607) scale(.68)" d="M3.900 12c0-1.710 1.390-3.100 3.100-3.100h4V7H7c-2.760 0-5 2.240-5 5s2.240 5 5 5h4v-1.900H7c-1.710 0-3.100-1.390-3.100-3.100zM8 13h8v-2H8v2zm9-6h-4v1.900h4c1.710 0 3.100 1.390 3.100 3.100s-1.390 3.100-3.100 3.100h-4V17h4c2.760 0 5-2.240 5-5s-2.240-5-5-5z"/>
 </g>
 <g stroke="#5f6368" stroke-width="1.700">
  <path d="M648 615h12M658 610c-1-2-6-2-7 0-.5 1.500 1 2.500 3 3M651 619c1 2 6 2 7 0 .3-1-.3-1.700-1-2.200" stroke-width="1.500"/>
  <path d="M828 608h14M828 612h10M828 616h14M828 620h10"/>
  <path d="M868 615h13M874.500 606v6M872 609l2.500-3 2.500 3M874.500 624v-6M872 621l2.500 3 2.500-3"/>
  <path d="M906 607v16M921 607v4M921 615v4M906 615h10M913 612l3 3-3 3M921 621v2"/>
  <path d="M946 607l12 8-7 1zM954 617l-4 7" />
  <path d="M1023 607h12v13h-9l-3 3zM1029 610v7M1025.500 613.500h7"/>
  <rect x="1050" y="607" width="14" height="16"/><path d="M1054 619v-3M1057 619v-7M1060 619v-5"/>
  <path d="M1080 608h12l-4.500 6v7h-3v-7z" stroke-width="1.500"/>
 </g>
 <g stroke="#c8c8c8" stroke-width="1.700"><path d="M775 607h14M775 607v4M789 607v4M775 623h14M775 623v-4M789 623v-4M775 615h5M789 615h-5M780 612.500l3 2.500-3 2.500M784 612.500l-3 2.500 3 2.500"/></g>
 <path d="M303 624h7M305 622l-2 2 2 2M328 624h8M334 622l2 2-2 2" stroke="#5f6368" stroke-width="1.200"/>
 <path d="M1820 618l6-6 6 6" stroke="#5f6368" stroke-width="2"/>

 <!-- side panel -->
 <rect x="1863" y="615" width="19" height="18" rx="1.500" fill="#4285f4"/><rect x="1879" y="618" width="3" height="15" fill="#fbbc04"/><rect x="1863" y="630" width="19" height="3" fill="#34a853"/><path d="M1879 630h3v3h-3z" fill="#ea4335"/><rect x="1866" y="618" width="13" height="12" fill="#fff"/>
 <text x="1872.500" y="627.500" font-family="Liberation Sans" font-size="8" fill="#1a73e8" text-anchor="middle">31</text>
 <rect x="1863" y="670" width="19" height="20" rx="1.500" fill="#fbbc04"/><circle cx="1872.500" cy="678" r="4" fill="#fff"/><path d="M1870.500 684h4" stroke="#fff" stroke-width="1.800"/>
 <circle cx="1873" cy="737" r="7" stroke="#4285f4" stroke-width="3"/><path d="M1869 736l3 3 9-9" stroke="#1a73e8" stroke-width="2.500"/>
 <path d="M1863 780h19" stroke="#dadce0"/>
 <path d="M1867 825h12M1873 819v12" stroke="#80868b" stroke-width="2"/>
</svg>
</body></html>
